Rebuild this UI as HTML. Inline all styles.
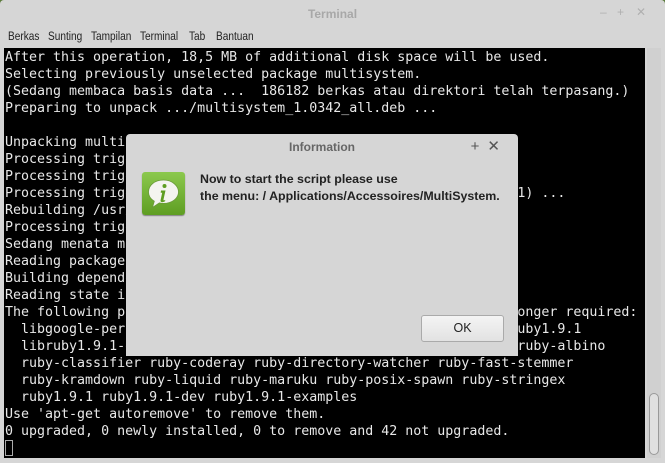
<!DOCTYPE html>
<html><head><style>
body{margin:0;width:665px;height:463px;overflow:hidden;background:#5a7a3a;font-family:"Liberation Sans",sans-serif;}
.win{position:absolute;left:0;top:0;width:665px;height:463px;background:#d6d6d6;border-radius:4px 4px 0 0;}
.title{position:absolute;top:7px;width:100%;text-align:center;font-weight:bold;font-size:12px;color:#a8a8a8;}
.ctl{position:absolute;top:5px;font-size:12px;color:#b0b0b0;}
.menu span{position:absolute;top:29px;font-size:12.3px;color:#222;transform:scaleX(.82);transform-origin:left}
.term{position:absolute;left:4px;top:48px;width:641px;height:410px;background:#000;}
pre{margin:0;position:absolute;left:1px;top:1px;font-family:"DejaVu Sans Mono","Liberation Mono",monospace;font-size:13.3px;line-height:17px;color:#e8e8e8;}
.cur{position:absolute;left:1px;top:392px;width:8px;height:16px;border:1px solid #aaa;box-sizing:border-box}
.sb{position:absolute;left:647px;top:48px;width:14px;height:410px;background:#d0d0d0}
.thumb{position:absolute;left:649px;top:393px;width:10px;height:62px;border:1px solid #999;border-radius:5px;background:#e0e0e0;box-sizing:border-box}
.dlg{position:absolute;left:126px;top:134px;width:392px;height:222px;background:#d6d6d6;border-radius:4px 4px 0 0;box-shadow:0 0 2px rgba(0,0,0,.5)}
.dt{position:absolute;top:6px;width:100%;text-align:center;font-weight:bold;font-size:12px;color:#666}
.dc{position:absolute;top:3px;right:10px;font-size:15px;color:#555;letter-spacing:8px}
.icon{position:absolute;left:16px;top:38px;width:43px;height:43px;border-radius:3px;background:linear-gradient(#8cc94e,#5e9e22);box-shadow:0 1px 1px rgba(0,0,0,.4)}
.msg{position:absolute;left:74px;top:37px;font-size:12.4px;font-weight:bold;color:#222;line-height:17px}
.ok{position:absolute;left:295px;top:181px;width:81px;height:25px;border:1px solid #aaa;border-radius:3px;background:linear-gradient(#f4f4f4,#e2e2e2);text-align:center;line-height:25px;font-size:12.5px;color:#222}
</style></head><body>
<div class="win">
<div class="title">Terminal</div>
<div class="ctl" style="left:600px">–</div><div class="ctl" style="left:617px">+</div><div class="ctl" style="left:636px">✕</div>
<div class="menu"><span style="left:8px">Berkas</span><span style="left:48px">Sunting</span><span style="left:91px">Tampilan</span><span style="left:140px">Terminal</span><span style="left:189px">Tab</span><span style="left:216px">Bantuan</span></div>
<div class="term"><pre>After this operation, 18,5 MB of additional disk space will be used.
Selecting previously unselected package multisystem.
(Sedang membaca basis data ...  186182 berkas atau direktori telah terpasang.)
Preparing to unpack .../multisystem_1.0342_all.deb ...

Unpacking multisystem (1.0342) ...
Processing triggers for man-db ...
Processing triggers for desktop-file-utils ...
Processing triggers for bamfdaemon (0.5.1+14.04.20140409-0ubuntu1) ...
Rebuilding /usr/share/applications/bamf-2.index...
Processing triggers for mime-support ...
Sedang menata multisystem ...
Reading package lists... Done
Building dependency tree
Reading state information... Done
The following packages were automatically installed and are no longer required:
  libgoogle-perftools4 libjs-jquery libruby1.9.1 libyaml-0-2 r ruby1.9.1
  libruby1.9.1-dbg libtcmalloc-minimal4 libunwind8 libxml2-util ruby-albino
  ruby-classifier ruby-coderay ruby-directory-watcher ruby-fast-stemmer
  ruby-kramdown ruby-liquid ruby-maruku ruby-posix-spawn ruby-stringex
  ruby1.9.1 ruby1.9.1-dev ruby1.9.1-examples
Use 'apt-get autoremove' to remove them.
0 upgraded, 0 newly installed, 0 to remove and 42 not upgraded.</pre><div class="cur"></div></div>
<div class="sb"></div><div class="thumb"></div>
</div>
<div class="dlg">
<div class="dt">Information</div>
<div class="dc">+✕</div>
<div class="icon"><svg width="43" height="43" viewBox="0 0 43 43"><path d="M21.5 8c-9 0-15 5.5-15 12 0 4 2.3 7.2 5.8 9.2l-1.8 6.3 6.8-4.6c1.3.3 2.7.5 4.2.5 9 0 15-5.5 15-11.4S30.5 8 21.5 8z" fill="#f4f4f0" stroke="#6a9a3a" stroke-width=".8"/><circle cx="22.5" cy="14" r="2" fill="#5e9e22"/><path d="M19 18.5h4.5l-2 9c-.2 1 .6 1.2 1.8.4l-.3 1.3c-2 1.3-5 1.4-4.4-1.2l1.6-7.2h-1.5z" fill="#5e9e22"/></svg></div>
<div class="msg">Now to start the script please use<br>the menu: / Applications/Accessoires/MultiSystem.</div>
<div class="ok">OK</div>
</div>
</body></html>
